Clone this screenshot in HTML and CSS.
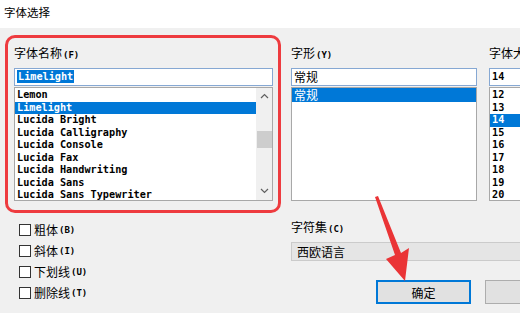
FILE: index.html
```html
<!DOCTYPE html>
<html lang="zh">
<head>
    <meta charset="UTF-8">
    <title>字体选择</title>
    <link rel="stylesheet" href="styles.css">
</head>
<body>

<div class="window">
    <div class="titlebar">字体选择</div>

    <div class="top-row">
        <!-- Schriftname, rot markiert -->
        <div class="font-group">
            <div class="label">字体名称<span class="key">(F)</span></div>
            <div class="input"><span class="sel-text">Limelight</span></div>
            <div class="list">
                <ul class="items mono">
                    <li>Lemon</li>
                    <li class="selected">Limelight</li>
                    <li>Lucida Bright</li>
                    <li>Lucida Calligraphy</li>
                    <li>Lucida Console</li>
                    <li>Lucida Fax</li>
                    <li>Lucida Handwriting</li>
                    <li>Lucida Sans</li>
                    <li>Lucida Sans Typewriter</li>
                </ul>
                <div class="scrollbar">
                    <svg class="chevron" width="15" height="15" viewBox="0 0 15 15"><polyline points="4,9 7.5,5.5 11,9" /></svg>
                    <div class="thumb"></div>
                    <svg class="chevron down" width="15" height="15" viewBox="0 0 15 15"><polyline points="4,6 7.5,9.5 11,6" /></svg>
                </div>
            </div>
        </div>

        <div class="style-group">
            <div class="label">字形<span class="key">(Y)</span></div>
            <div class="input">常规</div>
            <div class="list">
                <ul class="items cjk">
                    <li class="selected">常规</li>
                </ul>
            </div>
        </div>

        <div class="size-group">
            <div class="label">字体大小<span class="key">(S)</span></div>
            <div class="input mono">14</div>
            <div class="list">
                <ul class="items mono">
                    <li>12</li>
                    <li>13</li>
                    <li class="selected">14</li>
                    <li>15</li>
                    <li>16</li>
                    <li>17</li>
                    <li>18</li>
                    <li>19</li>
                    <li>20</li>
                </ul>
            </div>
        </div>
    </div>

    <div class="bottom-row">
        <div class="effects">
            <label class="check"><span class="box"></span>粗体<span class="key">(B)</span></label>
            <label class="check"><span class="box"></span>斜体<span class="key">(I)</span></label>
            <label class="check"><span class="box"></span>下划线<span class="key">(U)</span></label>
            <label class="check"><span class="box"></span>删除线<span class="key">(T)</span></label>
        </div>

        <div class="charset">
            <div class="label">字符集<span class="key">(C)</span></div>
            <div class="combo">西欧语言</div>
            <div class="buttons">
                <button class="btn default">确定</button>
                <button class="btn"></button>
            </div>
        </div>
    </div>

    <!-- roter Pfeil auf den OK-Knopf -->
    <svg class="arrow" width="520" height="313" viewBox="0 0 520 313">
        <polygon points="375,197 378,196 401,253 409,248 405,281 386,259 395,255" />
    </svg>
</div>

</body>
</html>
```

FILE: styles.css
```css
body {
    margin: 0;
    background-color: #f0f0f0;
    font-family: "Noto Sans CJK SC", sans-serif;
    font-size: 12px;
    color: #000;
    overflow: hidden;
}

.window {
    position: relative;
    width: 520px;
    height: 313px;
    overflow: hidden;
}

.titlebar {
    height: 28px;
    line-height: 24px;
    padding-left: 4px;
    background-color: #fff;
    font-size: 11.5px;
}

.mono {
    font-family: "DejaVu Sans Mono", monospace;
    font-weight: bold;
    font-size: 10.2px;
}

.key {
    font-family: "DejaVu Sans Mono", monospace;
    font-weight: bold;
    font-size: 9px;
    margin-left: 1px;
}

.label {
    height: 16px;
    line-height: 16px;
    margin-bottom: 7px;
    white-space: nowrap;
}

/* obere Reihe */
.top-row {
    display: flex;
    padding-top: 7px;
    height: 178px;
}

.top-row > div {
    flex-shrink: 0;
}

.font-group {
    box-sizing: border-box;
    width: 276px;
    height: 178px;
    margin-left: 5px;
    padding: 7px 5px 0 6px;
    border: 3px solid #ee3b3f;
    border-radius: 10px;
}

.style-group {
    width: 186px;
    margin-left: 10px;
    padding-top: 10px;
}

.size-group {
    width: 70px;
    margin-left: 12px;
    padding-top: 10px;
}

.input {
    box-sizing: border-box;
    height: 18px;
    line-height: 16px;
    padding-left: 2px;
    border: 1px solid #86a8d3;
    background-color: #fff;
    white-space: nowrap;
}

.font-group .input {
    font-family: "DejaVu Sans Mono", monospace;
    font-weight: bold;
    font-size: 10.2px;
}

.sel-text {
    background-color: #0078d7;
    color: #fff;
    padding: 1px 1px;
}

.list {
    box-sizing: border-box;
    height: 114px;
    margin-top: 1px;
    border: 1px solid #a8a8a8;
    background-color: #fff;
    display: flex;
}

.items {
    list-style: none;
    margin: 0;
    padding: 1px 0 0 0;
    flex: 1;
}

.items li {
    height: 12.5px;
    line-height: 12.5px;
    padding-left: 2px;
    white-space: nowrap;
}

.items.cjk {
    padding-top: 0;
}

.items.cjk li {
    height: 14px;
    line-height: 14px;
    font-size: 12px;
}

.items li.selected {
    background-color: #0078d7;
    color: #fff;
}

.scrollbar {
    width: 16px;
    background-color: #f0f0f0;
    display: flex;
    flex-direction: column;
    align-items: center;
}

.chevron {
    margin-top: 1px;
}

.chevron polyline {
    fill: none;
    stroke: #606060;
    stroke-width: 1.2;
}

.chevron.down {
    margin-top: auto;
    margin-bottom: 2px;
}

.thumb {
    width: 15px;
    height: 17px;
    margin-top: 27px;
    background-color: #cdcdcd;
}

/* untere Reihe */
.bottom-row {
    display: flex;
}

.effects {
    flex-shrink: 0;
    width: 272px;
    padding: 6px 0 0 19px;
}

.check {
    display: flex;
    align-items: center;
    height: 21px;
    line-height: 12px;
}

.box {
    box-sizing: border-box;
    width: 12px;
    height: 12px;
    margin-right: 3px;
    border: 1px solid #333;
    background-color: #fff;
}

.charset {
    flex-shrink: 0;
    width: 250px;
    padding-top: 6px;
}

.combo {
    box-sizing: border-box;
    height: 19px;
    line-height: 17px;
    padding-left: 5px;
    border: 1px solid #cbcbcb;
    background-color: #e5e5e5;
}

.buttons {
    display: flex;
    margin-top: 19px;
}

.btn {
    box-sizing: border-box;
    flex-shrink: 0;
    height: 24px;
    padding: 0;
    font-family: "Noto Sans CJK SC", sans-serif;
    font-size: 12px;
    background-color: #e1e1e1;
    border: 1px solid #adadad;
}

.btn.default {
    width: 95px;
    margin-left: 85px;
    border: 2px solid #0078d7;
}

.btn + .btn {
    width: 95px;
    margin-left: 14px;
}

.arrow {
    position: absolute;
    left: 0;
    top: 0;
    pointer-events: none;
}

.arrow polygon {
    fill: #ea3436;
}
```
